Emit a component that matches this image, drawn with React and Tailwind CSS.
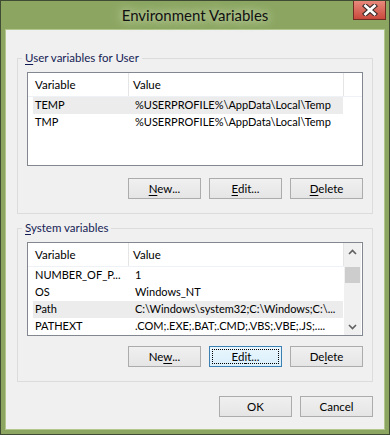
import React from "react";

const F = { fontFamily: 'Lato, "Noto Sans", Arial, sans-serif' };

function U({ children }) {
  return <span className="underline underline-offset-[2px] decoration-[1px]">{children}</span>;
}

function Btn({ children, focused }) {
  return (
    <div
      className={
        "relative w-[73px] h-[21px] flex items-center justify-center text-[11.5px] text-black border " +
        (focused
          ? "border-[#3c7fb1] bg-[linear-gradient(#eaf6fd,#d9f0fc)]"
          : "border-[#acacac] bg-[linear-gradient(#f0f0f0,#e5e5e5)]")
      }
    >
      {focused && (
        <div className="absolute inset-[2px] border border-dotted border-black" />
      )}
      <span className="relative leading-none">{children}</span>
    </div>
  );
}

function ListBox({ rows, sel, scroll }) {
  return (
    <div className="h-[94px] border border-[#828790] bg-white flex overflow-hidden">
      <div className="flex-1 flex flex-col min-w-0">
        <div className="h-[24px] shrink-0 flex text-[11.5px] text-black border-b border-[#eef1f5]">
          <div className="w-[101px] pl-[7px] flex items-center border-r border-[#e5e5e5]">Variable</div>
          <div className="w-[215px] pl-[4px] flex items-center border-r border-[#e5e5e5]">Value</div>
          <div className="flex-1" />
        </div>
        {rows.map((r, i) => (
          <div
            key={i}
            className={
              "h-[17px] shrink-0 ml-[5px] w-[310px] flex items-center text-[11px] text-black whitespace-nowrap " +
              (i === sel ? "bg-[#ececec]" : "")
            }
          >
            <div className="w-[96px] pl-[2px] overflow-hidden">{r[0]}</div>
            <div className="flex-1 pl-[6px] overflow-hidden">{r[1]}</div>
          </div>
        ))}
      </div>
      {scroll && (
        <div className="w-[17px] mr-[1px] shrink-0 bg-[#f0f0f0] flex flex-col items-center">
          <div className="h-[17px] w-full flex items-center justify-center">
            <svg width="9" height="6" viewBox="0 0 9 6">
              <path d="M1 5 L4.5 1.5 L8 5" fill="none" stroke="#606060" strokeWidth="1.6" />
            </svg>
          </div>
          <div className="mt-[7px] h-[16px] w-[15px] bg-[#cdcdcd]" />
          <div className="flex-1" />
          <div className="h-[17px] w-full flex items-center justify-center">
            <svg width="9" height="6" viewBox="0 0 9 6">
              <path d="M1 1 L4.5 4.5 L8 1" fill="none" stroke="#606060" strokeWidth="1.6" />
            </svg>
          </div>
        </div>
      )}
    </div>
  );
}

function Group({ label, children, className }) {
  return (
    <fieldset className={"border border-[#dcdcdc] mx-[11px] px-[9px] pt-[6px] " + className}>
      <legend className="ml-[-5px] px-[3px] text-[11.5px] leading-[16px] text-[#151c55]">{label}</legend>
      {children}
    </fieldset>
  );
}

export default function App() {
  return (
    <div style={F} className="w-[390px] h-[435px] bg-[#8ca662] border border-[#3f4c33] flex flex-col overflow-hidden">
      <div className="relative h-[28px] shrink-0 flex items-center justify-center">
        <span className="text-[15px] text-[#111] pt-[1px] [text-shadow:0_0_8px_rgba(230,240,210,0.9),0_0_14px_rgba(210,225,180,0.8)]">
          Environment Variables
        </span>
        <div className="absolute top-[-1px] right-[3px] w-[33px] h-[20px] border border-[#6e2c22] bg-[linear-gradient(#e88a7c,#c9493c)] flex items-center justify-center">
          <svg width="16" height="12" viewBox="0 0 16 12">
            <path d="M3.5 2 L12.5 10 M12.5 2 L3.5 10" stroke="#3a2a28" strokeWidth="5" strokeLinecap="square" />
            <path d="M3.5 2 L12.5 10 M12.5 2 L3.5 10" stroke="#ffffff" strokeWidth="2.8" strokeLinecap="square" />
          </svg>
        </div>
      </div>
      <div className="flex-1 mx-[4px] mb-[4px] border border-[#b2c78d] flex">
        <div className="flex-1 bg-[#f0f0f0] flex flex-col">
          <Group label={<><U>U</U>ser variables for User</>} className="mt-[20px] pb-[14px]">
            <ListBox
              sel={0}
              rows={[
                ["TEMP", "%USERPROFILE%\\AppData\\Local\\Temp"],
                ["TMP", "%USERPROFILE%\\AppData\\Local\\Temp"],
              ]}
            />
            <div className="flex justify-end gap-[8px] mt-[12px]">
              <Btn><U>N</U>ew...</Btn>
              <Btn><U>E</U>dit...</Btn>
              <Btn><U>D</U>elete</Btn>
            </div>
          </Group>
          <Group label={<><U>S</U>ystem variables</>} className="mt-[6px] pb-[14px]">
            <div className="h-[92px]">
              <ListBox
                sel={2}
                scroll
                rows={[
                  ["NUMBER_OF_P...", "1"],
                  ["OS", "Windows_NT"],
                  ["Path", "C:\\Windows\\system32;C:\\Windows;C:\\..."],
                  ["PATHEXT", ".COM;.EXE;.BAT;.CMD;.VBS;.VBE;.JS;...."],
                ]}
              />
            </div>
            <div className="flex justify-end gap-[8px] mt-[12px]">
              <Btn>Ne<U>w</U>...</Btn>
              <Btn focused>Ed<U>i</U>t...</Btn>
              <Btn>De<U>l</U>ete</Btn>
            </div>
          </Group>
          <div className="flex justify-end gap-[8px] mt-[14px] mr-[11px]">
            <Btn>OK</Btn>
            <Btn>Cancel</Btn>
          </div>
        </div>
      </div>
    </div>
  );
}
